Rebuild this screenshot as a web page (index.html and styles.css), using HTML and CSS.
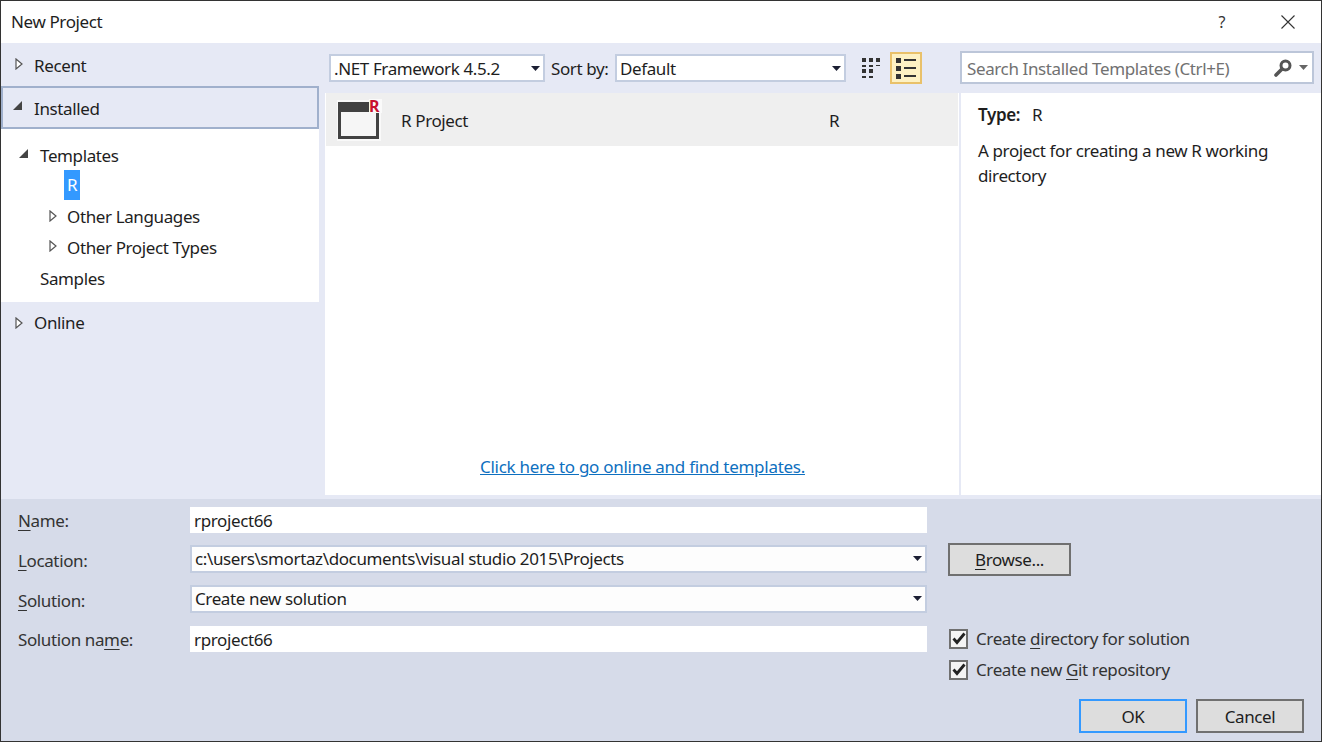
FILE: index.html
```html
<!DOCTYPE html>
<html lang="en">
<head>
    <meta charset="UTF-8">
    <title>New Project</title>
    <link rel="stylesheet" href="styles.css">
</head>
<body>
<div class="dialog">
    <div class="titleBar">
        <span class="titleText">New Project</span>
        <span class="helpBtn">?</span>
        <svg class="closeBtn" width="14" height="14" viewBox="0 0 14 14"><path d="M0.5 0.5L13.5 13.5M13.5 0.5L0.5 13.5" stroke="#333" stroke-width="1.1" fill="none"/></svg>
    </div>

    <div class="main">
        <div class="nav">
            <div class="navRow">
                <svg class="arrow" width="8" height="12" viewBox="0 0 8 12"><path d="M1 1L7 6L1 11Z" fill="#fff" stroke="#555" stroke-width="1.2"/></svg>
                Recent
            </div>
            <div class="navRow navSelected">
                <svg class="arrow arrowOpen" width="10" height="10" viewBox="0 0 10 10"><path d="M9 0V9H0Z" fill="#444"/></svg>
                Installed
            </div>
            <ul class="tree">
                <li class="treeRow treeTop">
                    <svg class="treeArrow" width="10" height="10" viewBox="0 0 10 10"><path d="M9 0V9H0Z" fill="#444"/></svg>
                    Templates
                </li>
                <li class="treeRow treeLeaf"><span class="leafSelected">R</span></li>
                <li class="treeRow treeSub">
                    <svg class="treeArrow" width="8" height="12" viewBox="0 0 8 12"><path d="M1 1L7 6L1 11Z" fill="#fff" stroke="#555" stroke-width="1.2"/></svg>
                    Other Languages
                </li>
                <li class="treeRow treeSub">
                    <svg class="treeArrow" width="8" height="12" viewBox="0 0 8 12"><path d="M1 1L7 6L1 11Z" fill="#fff" stroke="#555" stroke-width="1.2"/></svg>
                    Other Project Types
                </li>
                <li class="treeRow treeTop treePlain">Samples</li>
            </ul>
            <div class="navRow navOnline">
                <svg class="arrow" width="8" height="12" viewBox="0 0 8 12"><path d="M1 1L7 6L1 11Z" fill="#fff" stroke="#555" stroke-width="1.2"/></svg>
                Online
            </div>
        </div>

        <div class="center">
            <div class="toolbar">
                <div class="combo comboFramework">
                    <span>.NET Framework 4.5.2</span>
                    <svg class="caret" width="9" height="5" viewBox="0 0 9 5"><path d="M0 0H9L4.5 5Z" fill="#1b1f33"/></svg>
                </div>
                <span class="sortLabel">Sort by:</span>
                <div class="combo comboSort">
                    <span>Default</span>
                    <svg class="caret" width="9" height="5" viewBox="0 0 9 5"><path d="M0 0H9L4.5 5Z" fill="#1b1f33"/></svg>
                </div>
                <span class="viewBtn viewGrid">
                    <svg width="20" height="22" viewBox="0 0 20 22" fill="#333">
                        <rect x="1" y="1" width="4" height="4"/><rect x="8" y="1" width="4" height="4"/><rect x="15" y="1" width="4" height="4"/>
                        <rect x="1" y="8" width="4" height="2"/><rect x="8" y="8" width="4" height="2"/><rect x="15" y="8" width="4" height="1"/>
                        <rect x="1" y="12" width="4" height="4"/><rect x="8" y="12" width="4" height="4"/>
                        <rect x="1" y="19" width="4" height="2"/><rect x="8" y="19" width="4" height="2"/>
                    </svg>
                </span>
                <span class="viewBtn viewList">
                    <svg width="22" height="22" viewBox="0 0 22 22" fill="#333">
                        <rect x="1" y="1" width="5" height="5"/><rect x="9" y="2" width="12" height="2"/>
                        <rect x="1" y="9" width="5" height="5"/><rect x="9" y="10" width="12" height="2"/>
                        <rect x="1" y="17" width="5" height="5"/><rect x="9" y="18" width="12" height="2"/>
                    </svg>
                </span>
            </div>
            <div class="listPane">
                <div class="templateRow">
                    <span class="templateIcon">
                        <svg width="46" height="42" viewBox="0 0 46 42">
                            <rect x="1" y="1" width="44" height="41" fill="#f9f9f9"/>
                            <path d="M3.5 4.5H41.5V38.5H3.5Z" fill="#f6f6f6" stroke="#424242" stroke-width="3"/>
                            <rect x="2" y="3" width="31" height="10" fill="#424242"/>
                            <rect x="33" y="0" width="13" height="14" fill="#fafafa"/>
                            <rect x="40" y="14" width="3" height="4" fill="#424242"/>
                        </svg>
                        <span class="rBadge">R</span>
                    </span>
                    <span class="templateName">R Project</span>
                    <span class="templateLang">R</span>
                </div>
                <a class="onlineLink" href="#">Click here to go online and find templates.</a>
            </div>
        </div>

        <div class="details">
            <div class="searchWrap">
                <div class="searchBox">
                    <span class="searchHint">Search Installed Templates (Ctrl+E)</span>
                    <svg class="searchIcon" width="18" height="18" viewBox="0 0 18 18"><circle cx="11.5" cy="6.5" r="4.5" fill="none" stroke="#555" stroke-width="3"/><path d="M8 10L2 16" stroke="#555" stroke-width="3.6" stroke-linecap="round"/></svg>
                    <svg class="caret" width="9" height="5" viewBox="0 0 9 5"><path d="M0 0H9L4.5 5Z" fill="#666"/></svg>
                </div>
            </div>
            <div class="infoPane">
                <p class="infoType"><b>Type:</b><span>R</span></p>
                <p class="infoDesc">A project for creating a new R working directory</p>
            </div>
        </div>
    </div>

    <div class="bottom">
        <div class="formArea">
            <div class="fields">
                <div class="fieldRow">
                    <label class="fieldLabel"><u>N</u>ame:</label>
                    <input class="textInput" type="text" value="rproject66">
                </div>
                <div class="fieldRow">
                    <label class="fieldLabel"><u>L</u>ocation:</label>
                    <div class="combo comboWide">
                        <span>c:\users\smortaz\documents\visual studio 2015\Projects</span>
                        <svg class="caret" width="9" height="5" viewBox="0 0 9 5"><path d="M0 0H9L4.5 5Z" fill="#1b1f33"/></svg>
                    </div>
                </div>
                <div class="fieldRow">
                    <label class="fieldLabel"><u>S</u>olution:</label>
                    <div class="combo comboWide">
                        <span>Create new solution</span>
                        <svg class="caret" width="9" height="5" viewBox="0 0 9 5"><path d="M0 0H9L4.5 5Z" fill="#1b1f33"/></svg>
                    </div>
                </div>
                <div class="fieldRow">
                    <label class="fieldLabel">Solution na<u>m</u>e:</label>
                    <input class="textInput" type="text" value="rproject66">
                </div>
            </div>
            <div class="side">
                <button class="btn btnBrowse"><u>B</u>rowse...</button>
                <div class="checks">
                    <div class="checkRow">
                        <span class="checkBox"><svg width="14" height="13" viewBox="0 0 14 13"><path d="M1.5 6.5L5 10.5L12.5 1.5" fill="none" stroke="#222" stroke-width="2.8"/></svg></span>
                        <span>Create <u>d</u>irectory for solution</span>
                    </div>
                    <div class="checkRow">
                        <span class="checkBox"><svg width="14" height="13" viewBox="0 0 14 13"><path d="M1.5 6.5L5 10.5L12.5 1.5" fill="none" stroke="#222" stroke-width="2.8"/></svg></span>
                        <span>Create new <u>G</u>it repository</span>
                    </div>
                </div>
            </div>
        </div>
        <div class="actions">
            <button class="btn btnDefault">OK</button>
            <button class="btn">Cancel</button>
        </div>
    </div>
</div>
</body>
</html>
```

FILE: styles.css
```css
*{box-sizing:border-box;}
html,body{margin:0;padding:0;}
body{font-family:"Noto Sans","Open Sans","Liberation Sans",sans-serif;font-size:17px;letter-spacing:-0.38px;color:#1e1e1e;background:#fff;}
ul{list-style:none;margin:0;padding:0;}
p{margin:0;}
u{text-underline-offset:3px;}

.dialog{display:flex;flex-direction:column;width:1322px;height:742px;border:1px solid #333;overflow:hidden;}

/* title bar */
.titleBar{display:flex;align-items:center;height:42px;flex:none;padding:0 26px 0 10px;background:#fff;}
.titleText{flex:1;padding-bottom:2px;}
.helpBtn{margin-right:56px;color:#333;font-size:16px;}

/* middle part */
.main{display:flex;height:456px;flex:none;background:#e6e9f5;}

.nav{width:318px;flex:none;}
.navRow{display:flex;align-items:center;height:43px;padding-left:33px;padding-top:2px;position:relative;}
.navSelected{border:2px solid #a0b0cc;padding-left:31px;}
.navOnline{height:42px;padding-top:0;padding-bottom:2px;}
.arrow{position:absolute;left:14px;top:15px;}
.navSelected .arrow{left:10px;top:13px;}
.tree{height:173px;padding-top:11.2px;background:#fff;}
.treeRow{display:flex;align-items:center;height:30.7px;position:relative;}
.treeTop{padding-left:39px;}
.treeLeaf{padding-left:63px;}
.treeSub{padding-left:66px;}
.treeTop .treeArrow{position:absolute;left:18px;top:9px;}
.treeSub .treeArrow{position:absolute;left:48px;top:8px;}
.leafSelected{display:block;width:16px;height:30px;margin-top:-2px;line-height:30px;text-align:center;background:#3399ff;color:#fff;}

.center{width:635px;flex:none;margin-left:6px;}
.toolbar{display:flex;align-items:center;height:50px;padding-left:4px;}
.combo{display:flex;align-items:center;justify-content:space-between;height:28px;padding:0 3px;background:#fff;border:2px solid #c3cde0;}
.comboFramework{width:216px;}
.comboSort{width:231px;}
.comboWide{width:737px;margin-bottom:3px;background:#fdfdfd;}
.sortLabel{width:70px;padding-left:6px;white-space:nowrap;}
.viewBtn{display:flex;align-items:center;justify-content:center;}
.viewGrid{width:30px;margin-left:10px;}
.viewList{width:32px;height:32px;margin-left:4px;background:#fdf1c3;border:2px solid #e9c16a;}

.listPane{display:flex;flex-direction:column;height:402px;background:#fff;}
.templateRow{display:flex;align-items:center;height:53px;margin:0 2px 0 1px;background:#efefef;}
.templateIcon{position:relative;width:46px;height:42px;margin:1px 19px 0 10px;}
.templateIcon svg{display:block;}
.rBadge{position:absolute;right:3px;top:-3px;font-size:16px;line-height:20px;font-weight:700;color:#c8102e;}
.templateName{width:428px;padding-top:1px;}
.templateLang{padding-top:1px;}
.onlineLink{margin-top:auto;margin-bottom:17px;text-align:center;letter-spacing:-0.28px;color:#0e70c0;}

.details{flex:1;}
.searchWrap{height:50px;padding:8px 6px 0 0;}
.searchBox{display:flex;align-items:center;width:354px;height:33px;padding:0 4px 0 5px;background:#fff;border:2px solid #bcc6d9;}
.searchHint{flex:1;padding-top:1px;color:#717171;white-space:nowrap;}
.searchIcon{margin-right:7px;}
.infoPane{height:402px;padding:9px 17px;background:#fff;border-left:2px solid #e6e9f5;margin-left:-1px;}
.infoType{display:flex;gap:12px;line-height:25px;margin-bottom:11px;}
.infoType b{font-weight:600;}
.infoDesc{line-height:25px;width:320px;}

/* bottom form */
.bottom{display:flex;flex-direction:column;flex:1;padding-top:1px;background:#d6dbe9;}
.formArea{display:flex;}
.fields{width:926px;flex:none;padding-left:17px;}
.fieldRow{display:flex;align-items:center;height:40px;}
.fieldRow:last-child{margin-top:-1px;}
.fieldLabel{width:172px;flex:none;color:#333;}
.textInput{width:737px;height:26px;padding:0 4px;border:0;background:#fff;font:inherit;letter-spacing:inherit;color:#1e1e1e;outline:none;}
.side{flex:1;padding-left:21px;}
.btn{display:block;height:34px;width:108px;padding:0;background:#dddddd;border:2px solid #707070;font:inherit;letter-spacing:inherit;color:#1e1e1e;}
.btnBrowse{width:123px;height:33px;margin-top:43px;}
.btnDefault{border-color:#3399ff;}
.checks{margin-top:47px;padding-left:1px;}
.checkRow{display:flex;align-items:center;gap:8px;height:31px;color:#333;white-space:nowrap;}
.checkBox{display:flex;align-items:center;justify-content:center;width:19px;height:20px;background:#f4f4f4;border:2px solid #707070;}
.actions{display:flex;justify-content:flex-end;gap:9px;margin-top:auto;padding:0 17px 8px 0;}
```
